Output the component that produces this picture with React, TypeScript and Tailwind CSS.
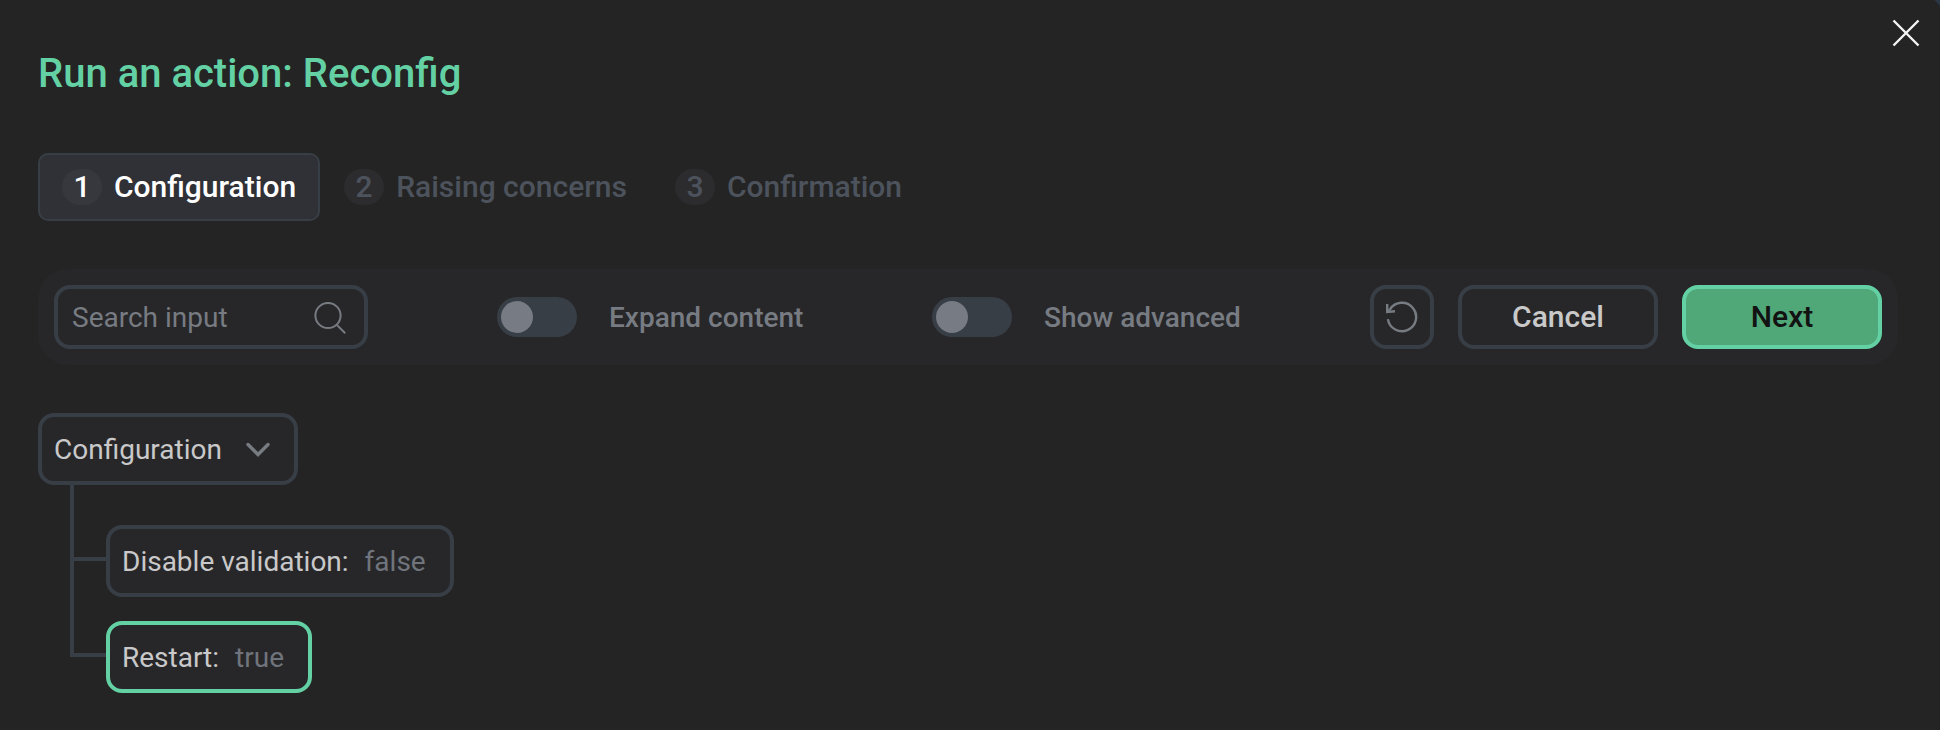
import { useState } from 'react';
import type { ReactNode } from 'react';

const STEPS = ['Configuration', 'Raising concerns', 'Confirmation'];

const FIELDS = [
  { name: 'Disable validation', value: 'false', selected: false },
  { name: 'Restart', value: 'true', selected: true },
];

function Steps({ current }: { current: number }) {
  return (
    <div className="mt-12 flex">
      {STEPS.map((title, i) => (
        <button
          key={title}
          type="button"
          className={
            i === current
              ? 'flex h-[68px] items-center gap-3 rounded-[10px] border-2 border-[#373e46] bg-[#303136] px-[22px] text-[30px] font-medium text-white'
              : 'flex h-[68px] items-center gap-3 rounded-[10px] border-2 border-transparent px-[22px] text-[30px] font-medium text-[#4d535c]'
          }
        >
          <span
            className={
              i === current
                ? 'flex h-9 w-10 items-center justify-center rounded-full bg-[#37383d] pb-0.5'
                : 'flex h-9 w-10 items-center justify-center rounded-full bg-[#2c2c2f] pb-0.5'
            }
          >
            {i + 1}
          </span>
          <span className="pb-0.5">{title}</span>
        </button>
      ))}
    </div>
  );
}

interface SwitchProps {
  label: string;
  className: string;
}

function Switch({ label, className }: SwitchProps) {
  const [checked, setChecked] = useState(false);

  return (
    <label className={`flex items-center gap-8 text-[28px] font-medium text-[#777b82] ${className}`}>
      <button
        type="button"
        role="switch"
        aria-checked={checked}
        onClick={() => setChecked(!checked)}
        className={`flex h-10 w-20 items-center rounded-full bg-[#373e46] p-1 ${checked ? 'justify-end' : ''}`}
      >
        <span className="size-8 rounded-full bg-[#777b84]" />
      </button>
      <span className="pt-0.5">{label}</span>
    </label>
  );
}

function Toolbar() {
  return (
    <div className="mt-12 flex h-24 items-center rounded-[30px] bg-[#272729] p-4">
      {/* Search */}
      <div className="flex h-16 w-[314px] items-center justify-between rounded-2xl border-4 border-[#373e46] pr-[18px] pl-[14px]">
        <span className="pt-0.5 text-[28px] text-[#777b82]">Search input</span>
        <svg className="mt-0.5" width="32" height="32" viewBox="0 0 32 32" fill="none" stroke="#777b82" strokeWidth="2">
          <circle cx="14" cy="13.5" r="12.6" />
          <path d="M22.6 22.6 31.2 31.2" />
        </svg>
      </div>

      <Switch label="Expand content" className="ml-[129px] w-[435px]" />
      <Switch label="Show advanced" className="" />

      {/* Actions */}
      <div className="ml-auto flex gap-6">
        <button
          type="button"
          className="flex size-16 items-center justify-center rounded-2xl border-4 border-[#373e46]"
        >
          <svg width="32" height="32" viewBox="0 0 32 32" fill="none" stroke="#777b82" strokeWidth="2.4">
            <path d="M1.9 18.1A14.2 14.2 0 1 0 4 8.3L1.6 10.7" />
            <path d="M1.2 3V10.9L9 10.2" />
          </svg>
        </button>
        <button
          type="button"
          className="h-16 w-[200px] rounded-2xl border-4 border-[#373e46] text-[30px] leading-9 font-medium text-[#c9c9c9]"
        >
          Cancel
        </button>
        <button
          type="button"
          className="h-16 w-[200px] rounded-2xl border-4 border-[#63d1a4] bg-[#50a778] text-[30px] leading-9 font-medium text-[#121212]"
        >
          Next
        </button>
      </div>
    </div>
  );
}

function TreeNode({ selected, children }: { selected?: boolean; children: ReactNode }) {
  return (
    <div
      className={`flex h-[72px] w-fit items-center rounded-2xl border-4 bg-[#272729] pl-3 text-[28px] text-[#c9c9c9] ${
        selected ? 'border-[#63d1a4]' : 'border-[#373e46]'
      }`}
    >
      {children}
    </div>
  );
}

function Tree() {
  return (
    <div className="mt-12">
      <TreeNode>
        <span className="pt-0.5">Configuration</span>
        <svg className="mr-[22px] ml-[22px]" width="28" height="28" viewBox="0 0 28 28" fill="none">
          <path d="M4 9.5 14 19.5 24 9.5" stroke="#777b82" strokeWidth="3.4" strokeLinecap="round" />
        </svg>
      </TreeNode>
      {FIELDS.map((field, i) => (
        <div key={field.name} className="ml-8 flex">
          {/* Branch lines */}
          <div className="w-9">
            <div
              className={
                i === 0
                  ? 'h-[76px] border-b-4 border-l-4 border-[#373e46]'
                  : 'h-[60px] border-b-4 border-l-4 border-[#373e46]'
              }
            />
            {i < FIELDS.length - 1 && <div className="h-9 border-l-4 border-[#373e46]" />}
          </div>
          <div className={i === 0 ? 'pt-10' : 'pt-6'}>
            <TreeNode selected={field.selected}>
              <span className="pt-0.5">{field.name}:</span>
              <span className="mr-6 ml-4 pt-0.5 text-[#70747c]">{field.value}</span>
            </TreeNode>
          </div>
        </div>
      ))}
    </div>
  );
}

export default function App() {
  return (
    <div className="relative h-[730px] w-[1940px] overflow-hidden bg-[#242424] px-[38px] pt-[50px] pr-[42px] font-['Roboto',sans-serif]">
      <button type="button" aria-label="Close" className="absolute top-[19px] right-5">
        <svg width="28" height="28" viewBox="0 0 28 28" stroke="#f5f5f5" strokeWidth="2.4">
          <path d="M1.5 1.5 26.5 26.5M26.5 1.5 1.5 26.5" />
        </svg>
      </button>
      {/* Sliver of the page behind the rounded corner */}
      <div className="absolute -top-1 -right-1 size-2 rotate-45 bg-[#2a3646]" />
      <h1 className="h-[55px] text-[40px] leading-12 font-medium text-[#63d1a4]">Run an action: Reconfig</h1>
      <Steps current={0} />
      <Toolbar />
      <Tree />
    </div>
  );
}
